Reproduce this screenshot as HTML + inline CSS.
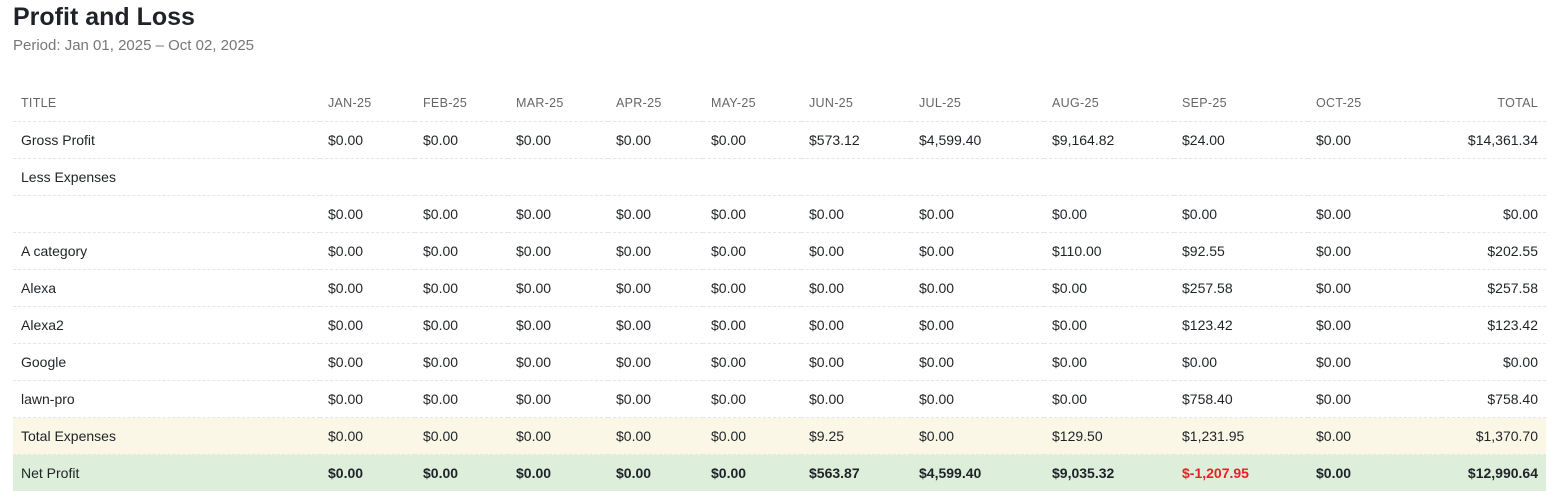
<!DOCTYPE html>
<html><head><style>
body{margin:0;background:#fff;font-family:"Liberation Sans",sans-serif;color:#1f2328;}
h1{position:absolute;left:13px;top:3px;margin:0;font-size:25px;font-weight:bold;color:#1f2328;}
.sub{position:absolute;left:13px;top:37px;font-size:15px;color:#777;}
table{position:absolute;left:13px;top:85px;width:1533px;border-collapse:collapse;table-layout:fixed;font-size:14px;}
td,th{height:36px;padding:0 8px;border-bottom:1px dashed #e3e5e8;white-space:nowrap;text-align:left;}
th{font-size:12.5px;font-weight:normal;color:#666;letter-spacing:.3px;}
tr.tot td{background:#faf7e6;}
tr.net td{background:#ddefdb;font-weight:bold;border-bottom:none;}
.r{text-align:right;}
.red{color:#ee1c24;}
</style></head><body>
<h1>Profit and Loss</h1>
<div class="sub">Period: Jan 01, 2025 – Oct 02, 2025</div>
<table>
<colgroup><col style="width:307px"><col style="width:95px"><col style="width:93px"><col style="width:100px"><col style="width:95px"><col style="width:98px"><col style="width:110px"><col style="width:133px"><col style="width:130px"><col style="width:134px"><col style="width:134px"><col></colgroup>
<tr><th>TITLE</th><th>JAN-25</th><th>FEB-25</th><th>MAR-25</th><th>APR-25</th><th>MAY-25</th><th>JUN-25</th><th>JUL-25</th><th>AUG-25</th><th>SEP-25</th><th>OCT-25</th><th class="r">TOTAL</th></tr>
<tr><td>Gross Profit</td><td>$0.00</td><td>$0.00</td><td>$0.00</td><td>$0.00</td><td>$0.00</td><td>$573.12</td><td>$4,599.40</td><td>$9,164.82</td><td>$24.00</td><td>$0.00</td><td class="r">$14,361.34</td></tr>
<tr><td>Less Expenses</td><td></td><td></td><td></td><td></td><td></td><td></td><td></td><td></td><td></td><td></td><td></td></tr>
<tr><td></td><td>$0.00</td><td>$0.00</td><td>$0.00</td><td>$0.00</td><td>$0.00</td><td>$0.00</td><td>$0.00</td><td>$0.00</td><td>$0.00</td><td>$0.00</td><td class="r">$0.00</td></tr>
<tr><td>A category</td><td>$0.00</td><td>$0.00</td><td>$0.00</td><td>$0.00</td><td>$0.00</td><td>$0.00</td><td>$0.00</td><td>$110.00</td><td>$92.55</td><td>$0.00</td><td class="r">$202.55</td></tr>
<tr><td>Alexa</td><td>$0.00</td><td>$0.00</td><td>$0.00</td><td>$0.00</td><td>$0.00</td><td>$0.00</td><td>$0.00</td><td>$0.00</td><td>$257.58</td><td>$0.00</td><td class="r">$257.58</td></tr>
<tr><td>Alexa2</td><td>$0.00</td><td>$0.00</td><td>$0.00</td><td>$0.00</td><td>$0.00</td><td>$0.00</td><td>$0.00</td><td>$0.00</td><td>$123.42</td><td>$0.00</td><td class="r">$123.42</td></tr>
<tr><td>Google</td><td>$0.00</td><td>$0.00</td><td>$0.00</td><td>$0.00</td><td>$0.00</td><td>$0.00</td><td>$0.00</td><td>$0.00</td><td>$0.00</td><td>$0.00</td><td class="r">$0.00</td></tr>
<tr><td>lawn-pro</td><td>$0.00</td><td>$0.00</td><td>$0.00</td><td>$0.00</td><td>$0.00</td><td>$0.00</td><td>$0.00</td><td>$0.00</td><td>$758.40</td><td>$0.00</td><td class="r">$758.40</td></tr>
<tr class="tot"><td>Total Expenses</td><td>$0.00</td><td>$0.00</td><td>$0.00</td><td>$0.00</td><td>$0.00</td><td>$9.25</td><td>$0.00</td><td>$129.50</td><td>$1,231.95</td><td>$0.00</td><td class="r">$1,370.70</td></tr>
<tr class="net"><td style="font-weight:normal">Net Profit</td><td>$0.00</td><td>$0.00</td><td>$0.00</td><td>$0.00</td><td>$0.00</td><td>$563.87</td><td>$4,599.40</td><td>$9,035.32</td><td class="red">$-1,207.95</td><td>$0.00</td><td class="r">$12,990.64</td></tr>
</table>
</body></html>
